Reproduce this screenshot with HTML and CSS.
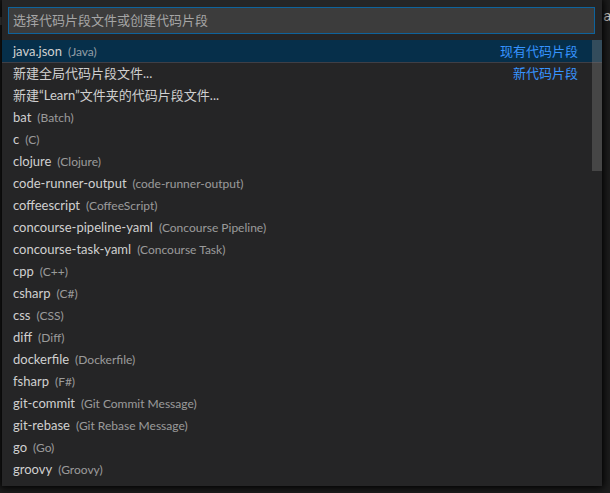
FILE: index.html
```html
<!DOCTYPE html>
<html>
<head>
<meta charset="utf-8">
<link rel="stylesheet" href="styles.css">
</head>
<body>
<div class="screen">
  <div class="gutter"><span class="mark"></span></div>
  <div class="picker">
    <div class="input-wrap">
      <div class="input">选择代码片段文件或创建代码片段</div>
    </div>
    <div class="list">
      <div class="row selected"><span class="label">java.json</span><span class="desc">(Java)</span><span class="group">现有代码片段</span></div>
      <div class="row sep"><span class="label">新建全局代码片段文件...</span><span class="group">新代码片段</span></div>
      <div class="row"><span class="label">新建“Learn”文件夹的代码片段文件...</span></div>
      <div class="row"><span class="label">bat</span><span class="desc">(Batch)</span></div>
      <div class="row"><span class="label">c</span><span class="desc">(C)</span></div>
      <div class="row"><span class="label">clojure</span><span class="desc">(Clojure)</span></div>
      <div class="row"><span class="label">code-runner-output</span><span class="desc">(code-runner-output)</span></div>
      <div class="row"><span class="label">coffeescript</span><span class="desc">(CoffeeScript)</span></div>
      <div class="row"><span class="label">concourse-pipeline-yaml</span><span class="desc">(Concourse Pipeline)</span></div>
      <div class="row"><span class="label">concourse-task-yaml</span><span class="desc">(Concourse Task)</span></div>
      <div class="row"><span class="label">cpp</span><span class="desc">(C++)</span></div>
      <div class="row"><span class="label">csharp</span><span class="desc">(C#)</span></div>
      <div class="row"><span class="label">css</span><span class="desc">(CSS)</span></div>
      <div class="row"><span class="label">diff</span><span class="desc">(Diff)</span></div>
      <div class="row"><span class="label">dockerfile</span><span class="desc">(Dockerfile)</span></div>
      <div class="row"><span class="label">fsharp</span><span class="desc">(F#)</span></div>
      <div class="row"><span class="label">git-commit</span><span class="desc">(Git Commit Message)</span></div>
      <div class="row"><span class="label">git-rebase</span><span class="desc">(Git Rebase Message)</span></div>
      <div class="row"><span class="label">go</span><span class="desc">(Go)</span></div>
      <div class="row"><span class="label">groovy</span><span class="desc">(Groovy)</span></div>
      <div class="scrollbar"></div>
    </div>
  </div>
  <div class="editor"><span class="code">av</span></div>
</div>
</body>
</html>
```
FILE: styles.css
```css
html, body {
  margin: 0;
  padding: 0;
  background: #1e1e1e;
  width: 610px;
  height: 493px;
  overflow: hidden;
}
.screen {
  display: flex;
  align-items: flex-start;
  font-family: "Lato", "Noto Sans CJK SC", sans-serif;
  font-size: 13px;
  color: #cccccc;
}
.gutter {
  width: 2px;
  flex: none;
  padding-top: 17px;
}
.mark {
  display: block;
  width: 2px;
  height: 8px;
  background: #555555;
}
.picker {
  width: 600px;
  flex: none;
  background: #252526;
  box-shadow: 0 0 8px 2px #000000;
  padding: 7px 0 6px 0;
  position: relative;
  z-index: 1;
}
.input-wrap {
  padding: 0 7px 6px 6px;
}
.input {
  height: 25px;
  line-height: 25px;
  background: #3c3c3c;
  border: 1px solid #0e639c;
  padding-left: 4px;
  color: #a6a6a6;
}
.list {
  position: relative;
}
.row {
  height: 22px;
  line-height: 22px;
  display: flex;
  align-items: baseline;
  padding: 0 24px 0 11px;
  white-space: nowrap;
  box-sizing: border-box;
}
.row.selected {
  background: #062f4a;
}
.row.sep {
  border-top: 1px solid #3f3f46;
  line-height: 21px;
}
.label {
  color: #d0d0d0;
}
.desc {
  font-size: 12px;
  margin-left: 6px;
  color: #cccccc;
  opacity: 0.7;
}
.group {
  margin-left: auto;
  color: #3794ff;
}
.scrollbar {
  position: absolute;
  top: 0;
  right: 0;
  width: 10px;
  height: 131px;
  background: rgba(121, 121, 121, 0.4);
}
.editor {
  flex: 1;
  height: 493px;
  background: #1e1e1e;
  overflow: hidden;
}
.code {
  display: block;
  padding: 9px 0 0 1px;
  line-height: 17px;
  font-family: "Liberation Mono", monospace;
  font-size: 15px;
  color: #d4d4d4;
}
```
